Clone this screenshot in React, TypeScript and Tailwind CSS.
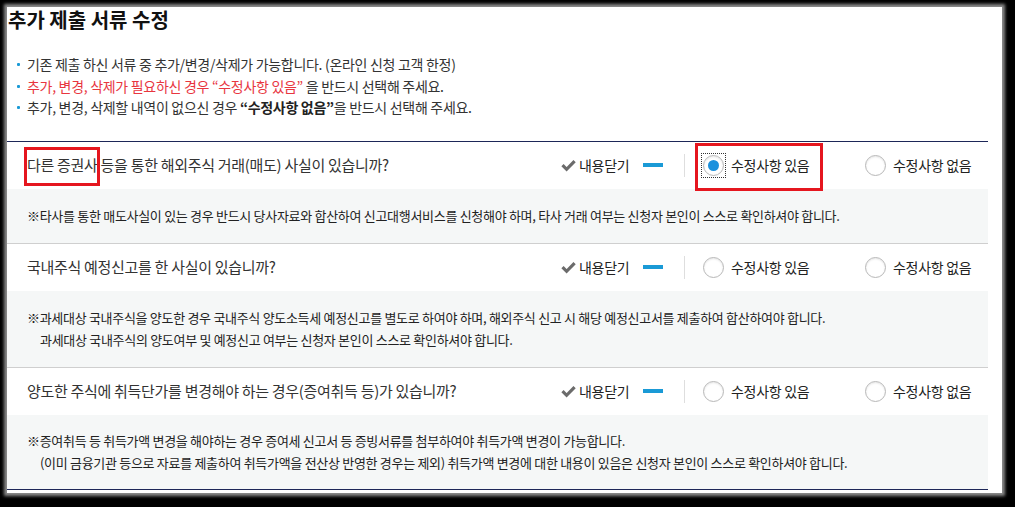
import React from "react";

function Check() {
  return (
    <svg width="15" height="13" viewBox="0 0 15 13" className="shrink-0">
      <path d="M1.5 6.2L5.6 10.3L13.6 2.2" fill="none" stroke="#6b6b6b" strokeWidth="3.2" />
    </svg>
  );
}

function Radio({ checked }: { checked?: boolean }) {
  return (
    <span className="flex h-[21px] w-[21px] shrink-0 items-center justify-center rounded-full border border-[#b8b8b8] bg-white shadow-[inset_0_1px_2px_rgba(0,0,0,0.10)]">
      {checked && <span className="h-[11px] w-[11px] rounded-full bg-[#1c91dd]" />}
    </span>
  );
}

function Controls({ focused }: { focused?: boolean }) {
  return (
    <div className="flex w-[427px] shrink-0 items-center text-[14px] text-[#222]">
      <Check />
      <span className="ml-[3px] w-[50px] whitespace-nowrap">내용닫기</span>
      <span className="ml-[14px] h-[4px] w-[20px] bg-[#1a9ad6]" />
      <span className="ml-[21px] h-[23px] w-px bg-[#dedede]" />
      <label className="ml-[18px] flex w-[162px] items-center">
        {focused ? (
          <span className="outline-1 outline-dotted outline-offset-[1px] outline-[#333]">
            <Radio checked />
          </span>
        ) : (
          <Radio />
        )}
        <span className="ml-[7px] whitespace-nowrap">수정사항 있음</span>
      </label>
      <label className="flex items-center">
        <Radio />
        <span className="ml-[7px] whitespace-nowrap">수정사항 없음</span>
      </label>
    </div>
  );
}

function Bullet({ children }: { children: React.ReactNode }) {
  return (
    <li className="flex items-center">
      <span className="ml-[10px] mr-[7px] h-[3px] w-[3px] rounded-[1px] bg-[#1a9ad6]" />
      <span>{children}</span>
    </li>
  );
}

export default function App() {
  return (
    <div className="h-[507px] w-[1015px] overflow-hidden bg-black pl-[7px] pt-[7px] font-['Noto_Sans_CJK_KR','Noto_Sans',sans-serif] tracking-[-0.3px]">
      <div className="h-[486px] w-[995px] bg-white shadow-[0_0_3px_3px_#8c8c8c]">
        <h1 className="ml-[1px] text-[20px] font-bold leading-[26px] tracking-normal text-[#111]">추가 제출 서류 수정</h1>

        <ul className="mt-[21px] text-[14px] leading-[21.5px] text-[#333]">
          <Bullet>기존 제출 하신 서류 중 추가/변경/삭제가 가능합니다. (온라인 신청 고객 한정)</Bullet>
          <Bullet>
            <span className="text-[#e8363f]">추가, 변경, 삭제가 필요하신 경우 “수정사항 있음”</span> 을 반드시 선택해 주세요.
          </Bullet>
          <Bullet>
            추가, 변경, 삭제할 내역이 없으신 경우 <b className="font-bold text-[#222]">“수정사항 없음”</b>을 반드시 선택해 주세요.
          </Bullet>
        </ul>

        <div className="mt-[22px] w-[981px] border-t border-[#1d2758]">
          {/* Row 1 */}
          <div className="relative flex h-[47px] items-center pl-[20px]">
            <p className="flex-1 text-[15px] text-[#333]">다른 증권사 등을 통한 해외주식 거래(매도) 사실이 있습니까?</p>
            <Controls focused />
            <span className="pointer-events-none absolute left-[17px] top-[5px] h-[39px] w-[76px] border-[3px] border-[#e5161f]" />
            <span className="pointer-events-none absolute left-[688px] top-[1px] z-10 h-[48px] w-[128px] border-[3px] border-[#e5161f]" />
          </div>
          <div className="border-b border-[#cfcfcf] bg-[#f5f7f7] py-[16px] pl-[20px] text-[13px] leading-[22px] text-[#222]">
            ※타사를 통한 매도사실이 있는 경우 반드시 당사자료와 합산하여 신고대행서비스를 신청해야 하며, 타사 거래 여부는 신청자 본인이 스스로 확인하셔야 합니다.
          </div>

          {/* Row 2 */}
          <div className="flex h-[47px] items-center pl-[20px]">
            <p className="flex-1 text-[15px] text-[#333]">국내주식 예정신고를 한 사실이 있습니까?</p>
            <Controls />
          </div>
          <div className="border-b border-[#cfcfcf] bg-[#f5f7f7] py-[16px] pl-[20px] text-[13px] leading-[22px] text-[#222]">
            <p>※과세대상 국내주식을 양도한 경우 국내주식 양도소득세 예정신고를 별도로 하여야 하며, 해외주식 신고 시 해당 예정신고서를 제출하여 합산하여야 합니다.</p>
            <p className="pl-[13px]">과세대상 국내주식의 양도여부 및 예정신고 여부는 신청자 본인이 스스로 확인하셔야 합니다.</p>
          </div>

          {/* Row 3 */}
          <div className="flex h-[47px] items-center pl-[20px]">
            <p className="flex-1 text-[15px] text-[#333]">양도한 주식에 취득단가를 변경해야 하는 경우(증여취득 등)가 있습니까?</p>
            <Controls />
          </div>
          <div className="border-b border-[#1d2758] bg-[#f5f7f7] py-[15px] pl-[20px] text-[13px] leading-[22px] text-[#222]">
            <p>※증여취득 등 취득가액 변경을 해야하는 경우 증여세 신고서 등 증빙서류를 첨부하여야 취득가액 변경이 가능합니다.</p>
            <p className="pl-[13px]">(이미 금융기관 등으로 자료를 제출하여 취득가액을 전산상 반영한 경우는 제외) 취득가액 변경에 대한 내용이 있음은 신청자 본인이 스스로 확인하셔야 합니다.</p>
          </div>
        </div>
      </div>
    </div>
  );
}
